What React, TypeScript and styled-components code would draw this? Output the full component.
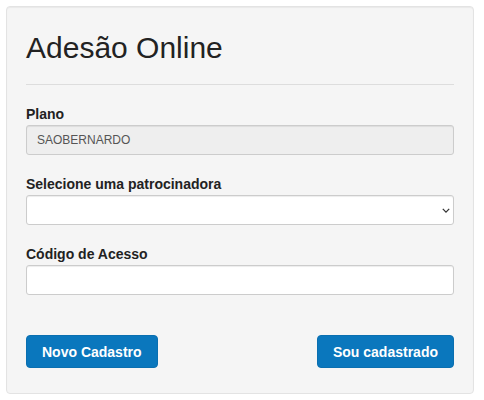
import styled, { createGlobalStyle } from 'styled-components';

const GlobalStyle = createGlobalStyle`
  * {
    box-sizing: border-box;
  }

  body {
    margin: 0;
    padding: 6px 10px 0 6px;
    background: #ffffff;
    font-family: 'Liberation Sans', Arial, sans-serif;
    font-size: 14px;
    line-height: 1.42857;
    color: #333333;
  }
`;

// Main
function App() {
  return (
    <>
      <GlobalStyle />
      <Well>
        <Title>Adesão Online</Title>
        <Divider />

        <FormGroup>
          <Label htmlFor='plano'>Plano</Label>
          <Input id='plano' value='SAOBERNARDO' disabled readOnly />
        </FormGroup>

        <FormGroup>
          <Label htmlFor='patrocinadora'>Selecione uma patrocinadora</Label>
          <SelectWrapper>
            <Select id='patrocinadora' defaultValue=''>
              <option value=''></option>
            </Select>
            <Chevron viewBox='0 0 10 6' aria-hidden='true'>
              <path d='M1 1l4 4 4-4' />
            </Chevron>
          </SelectWrapper>
        </FormGroup>

        <FormGroup>
          <Label htmlFor='codigo'>Código de Acesso</Label>
          <Input id='codigo' />
        </FormGroup>

        <Actions>
          <Button type='button'>Novo Cadastro</Button>
          <Button type='button'>Sou cadastrado</Button>
        </Actions>
      </Well>
    </>
  );
}

const Well = styled.div`
  width: 468px;
  min-height: 388px;
  padding: 19px;
  background-color: #f5f5f5;
  border: 1px solid #e3e3e3;
  border-radius: 4px;
  box-shadow: inset 0 1px 1px rgba(0, 0, 0, 0.05);
`;

const Title = styled.h2`
  margin: 5px 0 0;
  font-size: 30px;
  font-weight: 400;
  line-height: 33px;
  color: #222222;
`;

const Divider = styled.hr`
  margin: 20px 0 19px;
  border: 0;
  border-top: 1px solid #dddddd;
`;

const FormGroup = styled.div`
  display: flex;
  flex-direction: column;
  margin-bottom: 19px;
`;

const Label = styled.label`
  font-weight: 700;
  line-height: 20px;
  margin-bottom: 1px;
  color: #222222;
`;

const Input = styled.input`
  height: 30px;
  width: 100%;
  padding: 5px 10px;
  font-family: inherit;
  font-size: 12px;
  color: #555555;
  background-color: #ffffff;
  border: 1px solid #cccccc;
  border-radius: 3px;
  box-shadow: inset 0 1px 1px rgba(0, 0, 0, 0.075);

  &:disabled {
    background-color: #eeeeee;
    opacity: 1;
  }
`;

const SelectWrapper = styled.div`
  position: relative;
`;

const Select = styled.select`
  appearance: none;
  height: 30px;
  width: 100%;
  padding: 5px 10px;
  font-family: inherit;
  font-size: 12px;
  color: #555555;
  background-color: #ffffff;
  border: 1px solid #cccccc;
  border-radius: 3px;
  box-shadow: inset 0 1px 1px rgba(0, 0, 0, 0.075);
`;

const Chevron = styled.svg`
  position: absolute;
  right: 4px;
  top: 13px;
  width: 8px;
  height: 5px;
  fill: none;
  stroke: #333333;
  stroke-width: 1.6;
  pointer-events: none;
`;

const Actions = styled.div`
  display: flex;
  justify-content: space-between;
  margin-top: 40px;
`;

const Button = styled.button`
  height: 33px;
  padding: 0 15px;
  font-family: inherit;
  font-size: 14px;
  font-weight: 700;
  color: #ffffff;
  background-color: #0a77bd;
  border: 1px solid #0a6fb0;
  border-radius: 4px;
  cursor: pointer;
`;

export default App;
